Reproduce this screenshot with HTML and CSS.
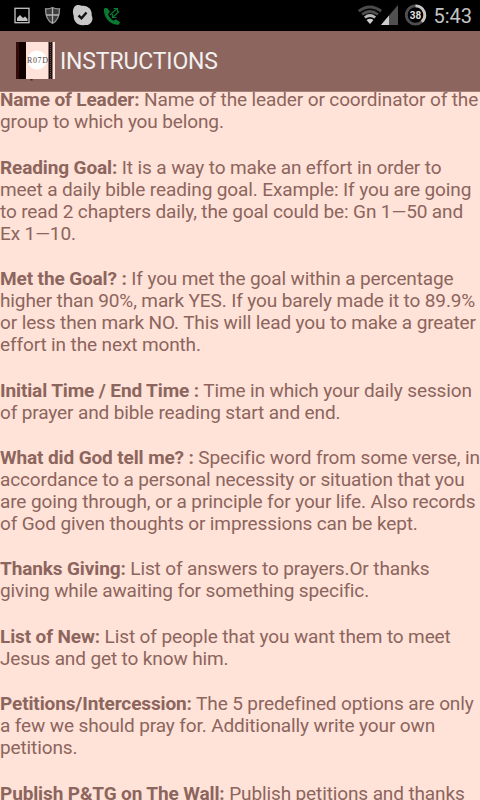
FILE: index.html
```
<!DOCTYPE html>
<html lang="en">
<head>
    <meta charset="UTF-8">
    <meta name="viewport" content="width=device-width, initial-scale=1.0">
    <title>Instructions</title>
    <link rel="stylesheet" href="styles.css">
</head>
<body>
    <div class="status">
        <svg class="icons" width="126" height="30" viewBox="0 0 126 30">
            <!-- picture -->
            <rect x="15" y="8.3" width="14" height="14.4" fill="none" stroke="#c4c4c4" stroke-width="1.3"/>
            <path d="M17 21v-3l3-3 3 3 2-1.5 2.5 2.5v2z" fill="#c4c4c4"/>
            <!-- shield -->
            <path d="M52.5 7.5c2.500 1.300 5 1.500 7 1.300 0 6-1.500 12-7 14.700-5.500-2.700-7-8.700-7-14.700 2 .2 4.500 0 7-1.300z" fill="#3c3c3c" stroke="#969696" stroke-width="1.300"/>
            <path d="M52.500 8v15M46 15h13" stroke="#b5b5b5" stroke-width="1.300"/>
            <!-- check -->
            <path d="M76 5.500c2-.8 4-.6 5.500.3 6-1 11 3.500 10.200 9.700 2.500 5-1.500 10.500-7 9.500-6 1.500-11.500-3-11-9.200-1.500-4-.8-8.500 2.300-10.300z" fill="#c8c8c8"/>
            <path d="M78.500 15.500l3 2.700 5-5.700" fill="none" stroke="#111" stroke-width="2.400"/>
            <!-- call -->
            <path d="M104 8.500l3-.8 3 4-2 2.500c1 3 3 5 5.500 6.500l2.500-1.500 4 3-1 2.300c-8 1.500-16-7-15-16z" fill="#087b32"/>
            <path d="M110 15l7-6.500M113.500 8.500h4v3.500M119 11.500l-6.500 6M112.500 14v3.500h4" fill="none" stroke="#087b32" stroke-width="1.200"/>
        </svg>
        <div class="right">
            <svg width="70" height="30" viewBox="0 0 70 30">
                <!-- wifi -->
                <g fill="none" stroke-width="2.700">
                    <path d="M.8 11.200q11.200-8.400 22.400 0" stroke="#4b4b4b"/>
                    <path d="M4 14.500q8-6 16 0" stroke="#4f4f4f"/>
                    <path d="M6.800 17.500q5.200-4 10.400 0" stroke="#b8b8b8"/>
                </g>
                <path d="M8.500 20q3.500-2.500 7 0L12 24z" fill="#d0d0d0"/>
                <!-- signal -->
                <path d="M23 25L40 5v20z" fill="#505050"/>
                <path d="M23 25l8-9.400V25z" fill="#cdcdcd"/>
                <!-- battery -->
                <circle cx="57.500" cy="15" r="9.200" fill="none" stroke="#4e4e4e" stroke-width="2.800"/>
                <path d="M57.500 5.800a9.200 9.200 0 0 1 6.300 15.900" fill="none" stroke="#c6c6c6" stroke-width="2.800"/>
                <text x="57.500" y="18.700" class="battery">38</text>
            </svg>
            <span class="clock">5:43</span>
        </div>
    </div>

    <div class="bar">
        <svg class="logo" width="40" height="40" viewBox="0 0 40 40">
            <rect width="39" height="37" y="1" fill="#ffe3da"/>
            <rect width="10" height="37" y="1" fill="#120000"/>
            <rect width="3" height="37" y="1" fill="#350b0b"/>
            <rect x="32.500" y="1" width="4" height="37" fill="#20100f"/>
            <path d="M34.500 1v37" stroke="#68504c" stroke-dasharray="1 1"/>
            <circle cx="21" cy="19" r="9.500" fill="#fff"/>
            <text x="21.500" y="22" class="logo-text" textLength="21">R07D</text>
            <rect x="14.500" y="38" width="2" height="1.500" fill="#43201d"/>
        </svg>
        <h1>INSTRUCTIONS</h1>
    </div>

    <div class="content">
        <p><b>Name of Leader:</b> Name of the leader or coordinator of the<br>
            group to which you belong.</p>
        <p><b>Reading Goal:</b> It is a way to make an effort in order to<br>
            meet a daily bible reading goal. Example: If you are going<br>
            to read 2 chapters daily, the goal could be: Gn 1—50 and<br>
            Ex 1—10.</p>
        <p><b>Met the Goal? :</b> If you met the goal within a percentage<br>
            higher than 90%, mark YES. If you barely made it to 89.9%<br>
            or less then mark NO. This will lead you to make a greater<br>
            effort in the next month.</p>
        <p><b>Initial Time / End Time :</b> Time in which your daily session<br>
            of prayer and bible reading start and end.</p>
        <p><b>What did God tell me? :</b> Specific word from some verse, in<br>
            accordance to a personal necessity or situation that you<br>
            are going through, or a principle for your life. Also records<br>
            of God given thoughts or impressions can be kept.</p>
        <p><b>Thanks Giving:</b> List of answers to prayers.Or thanks<br>
            giving while awaiting for something specific.</p>
        <p><b>List of New:</b> List of people that you want them to meet<br>
            Jesus and get to know him.</p>
        <p><b>Petitions/Intercession:</b> The 5 predefined options are only<br>
            a few we should pray for. Additionally write your own<br>
            petitions.</p>
        <p><b>Publish P&amp;TG on The Wall:</b> Publish petitions and thanks</p>
    </div>
</body>
</html>
```
FILE: styles.css
```
* {
    margin: 0;
    padding: 0;
    box-sizing: border-box;
}

body {
    width: 480px;
    height: 800px;
    overflow: hidden;
    display: flex;
    flex-direction: column;
    background-color: #ffe2d8;
    color: #8c655d;
    font-family: Roboto, sans-serif;
}

.status {
    flex: none;
    display: flex;
    justify-content: space-between;
    height: 31px;
    background-color: #000;
}

.right {
    display: flex;
    padding-right: 8px;
}

.clock {
    margin-left: 5px;
    color: #c3c3c3;
    font-size: 20px;
    line-height: 32px;
}

.battery {
    fill: #ddd;
    font-size: 10px;
    font-weight: 700;
    text-anchor: middle;
}

.bar {
    flex: none;
    display: flex;
    align-items: center;
    height: 61px;
    padding-left: 16px;
    background-color: #8c665e;
    border-bottom: 1px solid #a57e75;
}

.logo {
    margin-right: 4px;
}

.logo-text {
    fill: #5a4742;
    font-family: "Liberation Serif", serif;
    font-size: 8px;
    text-anchor: middle;
}

h1 {
    padding-top: 2px;
    color: #f3f0ef;
    font-size: 23px;
    font-weight: 400;
    line-height: 30px;
    letter-spacing: -0.15px;
}

.content {
    flex: 1;
    margin-top: -3px;
    overflow: hidden;
    clip-path: inset(3px 0 0 0);
    padding-top: 0.4px;
    font-size: 19px;
    line-height: 22px;
    letter-spacing: -0.12px;
    font-variant-ligatures: common-ligatures;
    white-space: nowrap;
}

.content p {
    margin-bottom: 23.4px;
}
```
